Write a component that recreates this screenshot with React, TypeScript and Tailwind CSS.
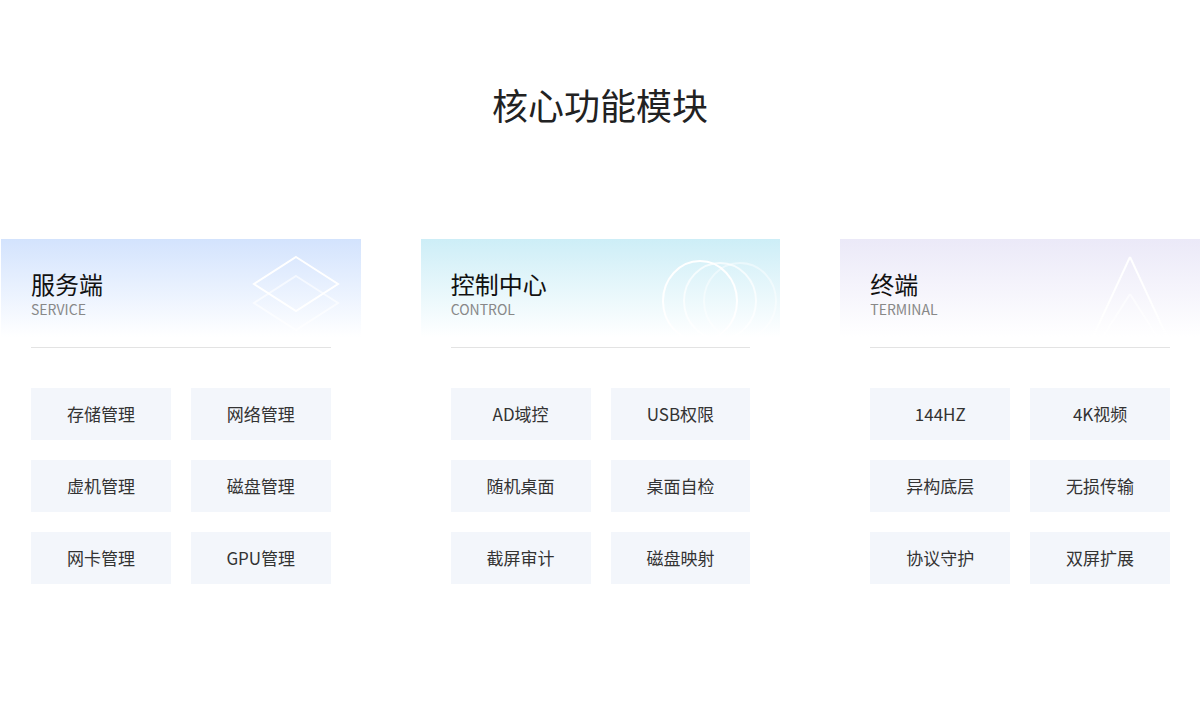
import React from "react";

const F = { fontFamily: '"Noto Sans CJK SC", "Noto Sans", sans-serif' };

function Diamond() {
  return (
    <svg width="90" height="80" viewBox="0 0 90 80" className="absolute right-[20px] top-[15px]">
      <path d="M45 3 L87 30 L45 57 L3 30 Z" fill="none" stroke="white" strokeWidth="2" />
      <path d="M45 22 L87 49 L45 76 L3 49 Z" fill="none" stroke="white" strokeOpacity="0.6" strokeWidth="2" />
    </svg>
  );
}
function Circles() {
  return (
    <svg width="130" height="90" viewBox="0 0 130 90" className="absolute right-0 top-[12px]">
      <ellipse cx="50" cy="50" rx="37" ry="40" fill="none" stroke="white" strokeWidth="2" />
      <ellipse cx="70" cy="50" rx="36" ry="38" fill="none" stroke="white" strokeOpacity="0.7" strokeWidth="2" />
      <ellipse cx="90" cy="50" rx="36" ry="38" fill="none" stroke="white" strokeOpacity="0.45" strokeWidth="2" />
    </svg>
  );
}
function Tri() {
  return (
    <svg width="90" height="100" viewBox="0 0 90 100" className="absolute right-[25px] top-[15px]">
      <path d="M45 3 L83 85 M45 3 L7 85" fill="none" stroke="white" strokeWidth="2" />
      <path d="M45 40 L80 95 M45 40 L10 95" fill="none" stroke="white" strokeOpacity="0.6" strokeWidth="2" />
    </svg>
  );
}

const cards = [
  { t: "服务端", s: "SERVICE", bg: "bg-gradient-to-b from-[#d3e3fd] to-white", icon: <Diamond />, items: ["存储管理", "网络管理", "虚机管理", "磁盘管理", "网卡管理", "GPU管理"] },
  { t: "控制中心", s: "CONTROL", bg: "bg-gradient-to-b from-[#cdeef7] to-white", icon: <Circles />, items: ["AD域控", "USB权限", "随机桌面", "桌面自检", "截屏审计", "磁盘映射"] },
  { t: "终端", s: "TERMINAL", bg: "bg-gradient-to-b from-[#ebe9f8] to-white", icon: <Tri />, items: ["144HZ", "4K视频", "异构底层", "无损传输", "协议守护", "双屏扩展"] },
];

export default function App() {
  return (
    <div className="w-[1200px] h-[713px] bg-white overflow-hidden" style={F}>
      <h1 className="text-center text-[36px] leading-none text-[#222] pt-[86px]">核心功能模块</h1>
      <div className="flex gap-[60px] pl-[1px] mt-[117px]">
        {cards.map((c) => (
          <div key={c.t} className="w-[360px] relative">
            <div className={`absolute left-0 top-0 w-full h-[98px] ${c.bg} overflow-hidden`}>{c.icon}</div>
            <div className="relative px-[30px]">
              <div className="pt-[31px] h-[109px] border-b border-[#e3e3e3]">
                <div className="text-[24px] leading-[28px] text-[#111]">{c.t}</div>
                <div className="text-[14px] leading-[18px] text-[#888] mt-[2px]">{c.s}</div>
              </div>
              <div className="grid grid-cols-2 gap-[20px] mt-[40px]">
                {c.items.map((i) => (
                  <div key={i} className="h-[52px] bg-[#f3f6fb] flex items-center justify-center text-[17px] text-[#333]">{i}</div>
                ))}
              </div>
            </div>
          </div>
        ))}
      </div>
    </div>
  );
}
